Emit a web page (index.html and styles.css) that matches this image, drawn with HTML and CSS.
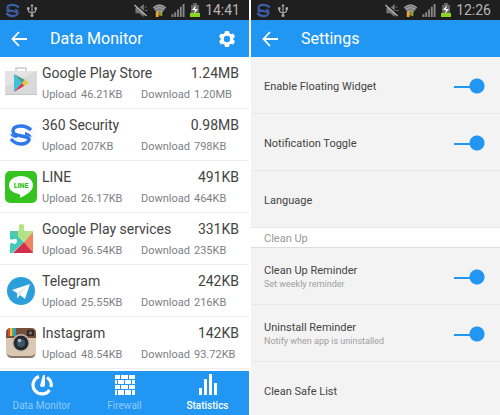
FILE: index.html
```html
<!DOCTYPE html>
<html lang="en">
<head>
    <meta charset="UTF-8">
    <meta name="viewport" content="width=device-width, initial-scale=1.0">
    <title>360 Security</title>
    <link rel="stylesheet" href="styles.css">
</head>
<body>
    <!-- icons used on both screens -->
    <svg class="defs" width="0" height="0" aria-hidden="true">
        <symbol id="logo" viewBox="0 0 24 24">
            <path d="M22 7Q18 3 12 3Q4 3 4 8Q4 11 8 12L17 14Q21 15 20 17Q18 21 12 21Q6 21 2 16" fill="none" stroke="currentColor" stroke-width="3.400"/>
            <path d="M1 11L8 12L8 15Q3 15 1 11ZM23 14L16 12L16 9Q21 10 23 14Z" fill="currentColor"/>
        </symbol>
        <symbol id="usb" viewBox="0 0 12 16">
            <path d="M6 2V14M1.500 5V8Q1.500 10 6 11M10.500 5V8Q10.500 10 6 11" fill="none" stroke="#aaa" stroke-width="1.300"/>
            <path d="M6 0L8 3H4ZM0 4H3V7H0ZM9 4H12V7H9Z" fill="#aaa"/>
            <circle cx="6" cy="14" r="1.800" fill="#aaa"/>
        </symbol>
        <symbol id="mute" viewBox="0 0 14 14">
            <path d="M1 4H5L10 0V14L5 10H1Z" fill="#777"/>
            <path d="M11 4L13 3M11 7H14M11 10L13 11" stroke="#777"/>
            <path d="M2 1L14 12" stroke="#1f1f1f" stroke-width="1.500"/>
            <path d="M0 1L13 13" stroke="#b5b5b5" stroke-width="1.500"/>
        </symbol>
        <symbol id="wifi" viewBox="0 0 14 14">
            <path d="M0 4Q7 -3 14 4L7 13Z" fill="#777"/>
            <path d="M0 4Q7 -2 14 4M2 6Q7 2 12 6M4 8Q7 6 10 8" fill="none" stroke="#b5b5b5"/>
            <path d="M3 8H6V14H3Z" fill="#f5a623"/>
            <path d="M8 8H10V13H8Z" fill="#8bb52c"/>
        </symbol>
        <symbol id="signal" viewBox="0 0 14 14">
            <path d="M0 11H2V14H0ZM3 9H5V14H3ZM6 6H8V14H6ZM9 3H11V14H9ZM12 0H14V14H12Z" fill="#888"/>
        </symbol>
        <symbol id="battery" viewBox="0 0 10 14">
            <path d="M3 0H7V2H9V11H1V2H3Z" fill="#666"/>
            <path d="M0 10H10V14H0Z" fill="#8bd51c"/>
            <path d="M6 2L2 7H5L4 11L8 6H5Z" fill="#fff"/>
        </symbol>
        <symbol id="back" viewBox="0 0 16 16">
            <path d="M8 1L1.500 8L8 15M2 8H16" fill="none" stroke="#fff" stroke-width="1.800"/>
        </symbol>
    </svg>

    <main class="screens">
        <section class="screen monitor">
            <div class="status">
                <svg class="logo" width="15" height="15"><use href="#logo"/></svg>
                <svg width="10" height="15"><use href="#usb"/></svg>
                <svg class="push" width="14" height="13"><use href="#mute"/></svg>
                <svg width="13" height="13"><use href="#wifi"/></svg>
                <svg width="14" height="13"><use href="#signal"/></svg>
                <svg width="10" height="14"><use href="#battery"/></svg>
                <span class="clock">14:41</span>
            </div>
            <header class="bar">
                <button class="icon" aria-label="Back"><svg width="16" height="16"><use href="#back"/></svg></button>
                <h1>Data Monitor</h1>
                <button class="icon" aria-label="Options">
                    <svg width="16" height="16" viewBox="0 0 16 16">
                        <path d="M6 0H10L10.500 2.300L12 3.200L14.200 2.500L16 5.700L14.300 7.200V8.800L16 10.300L14.200 13.500L12 12.800L10.500 13.700L10 16H6L5.500 13.700L4 12.800L1.800 13.500L0 10.300L1.700 8.800V7.200L0 5.700L1.800 2.500L4 3.200L5.500 2.300ZM8 4.800A3.200 3.200 0 1 0 8 11.200A3.200 3.200 0 1 0 8 4.800Z" fill="#fff" fill-rule="evenodd"/>
                    </svg>
                </button>
            </header>

            <ul class="apps">
                <li>
                    <svg width="32" height="32" viewBox="0 0 32 32">
                        <path d="M11 5V1H21V5" fill="none" stroke="#ccc" stroke-width="1.500"/>
                        <path d="M0 4H32V28H0Z" fill="#d9d9d9"/>
                        <path d="M0 4H32L0 20Z" fill="#e4e4e4"/>
                        <path d="M0 27H32V28H0Z" fill="#c6c6c6"/>
                        <path d="M9 7L17 16L9 25Z" fill="#3cc3d8"/>
                        <path d="M9 7L20 13L17 16Z" fill="#4c9a8c"/>
                        <path d="M20 13L24 16L19 19L17 16Z" fill="#e9c53b"/>
                        <path d="M9 25L17 16L19 19Z" fill="#d6334c"/>
                    </svg>
                    <div class="info">
                        <div class="total"><h2>Google Play Store</h2><b>1.24MB</b></div>
                        <div class="traffic"><span>Upload</span><span>46.21KB</span><span>Download</span><span>1.20MB</span></div>
                    </div>
                </li>
                <li>
                    <svg class="blue" width="32" height="32" viewBox="0 0 32 32">
                        <circle cx="16" cy="16" r="15" fill="#fbfbfb"/>
                        <use href="#logo" x="4" y="4" width="24" height="24"/>
                    </svg>
                    <div class="info">
                        <div class="total"><h2>360 Security</h2><b>0.98MB</b></div>
                        <div class="traffic"><span>Upload</span><span>207KB</span><span>Download</span><span>798KB</span></div>
                    </div>
                </li>
                <li>
                    <svg width="32" height="32" viewBox="0 0 32 32">
                        <rect width="32" height="32" rx="5" fill="#35c41f"/>
                        <path d="M16 5C9 5 4 9 4 14.500C4 19 8 22 14 23Q16 24 15 27Q28 21 28 14.500C28 9 23 5 16 5Z" fill="#fff"/>
                        <text class="line-text" x="16" y="17" text-anchor="middle">LINE</text>
                    </svg>
                    <div class="info">
                        <div class="total"><h2>LINE</h2><b>491KB</b></div>
                        <div class="traffic"><span>Upload</span><span>26.17KB</span><span>Download</span><span>464KB</span></div>
                    </div>
                </li>
                <li>
                    <svg width="32" height="32" viewBox="0 0 32 32">
                        <clipPath id="puzzle">
                            <path d="M5 8H13Q15 7 14 5Q13 1 16.500 1Q20 1 19 5Q18 7 20 8H28V30H5V21Q7 19 9 21Q12 21 12 18Q12 15 9 16Q7 17 5 16Z"/>
                        </clipPath>
                        <g clip-path="url(#puzzle)">
                            <path d="M5 6L19 19L5 32Z" fill="#43c9b8"/>
                            <path d="M5 6V0H28V9L19 19Z" fill="#b5e287"/>
                            <path d="M5 8H13V14L19 19L5 8Z" fill="#56c8a0"/>
                            <path d="M28 9V30L19 19Z" fill="#ef8660"/>
                            <path d="M6 32L19 19L29 31Z" fill="#d0304d"/>
                        </g>
                    </svg>
                    <div class="info">
                        <div class="total"><h2>Google Play services</h2><b>331KB</b></div>
                        <div class="traffic"><span>Upload</span><span>96.54KB</span><span>Download</span><span>235KB</span></div>
                    </div>
                </li>
                <li>
                    <svg width="32" height="32" viewBox="0 0 32 32">
                        <circle cx="16" cy="16" r="14" fill="#2b9fda"/>
                        <path d="M7 15L25 9L20 24L15 20L12 23V18Z" fill="#fff"/>
                        <path d="M12 18L22 11L15 20L12 23Z" fill="#dcebf5"/>
                    </svg>
                    <div class="info">
                        <div class="total"><h2>Telegram</h2><b>242KB</b></div>
                        <div class="traffic"><span>Upload</span><span>25.55KB</span><span>Download</span><span>216KB</span></div>
                    </div>
                </li>
                <li>
                    <svg width="32" height="32" viewBox="0 0 32 32">
                        <rect x="1" y="1" width="30" height="30" rx="5" fill="#d9c8b4"/>
                        <path d="M1 11V6Q1 1 6 1H26Q31 1 31 6V11Z" fill="#74503a"/>
                        <path d="M3 2H5V9H3Z" fill="#e0453c"/>
                        <path d="M5 1H7V9H5Z" fill="#f3c23a"/>
                        <path d="M7 1H9V9H7Z" fill="#58b259"/>
                        <path d="M9 1H11V9H9Z" fill="#3d8fd1"/>
                        <rect x="22" y="3" width="7" height="6" rx="1" fill="#30241f"/>
                        <circle cx="25.500" cy="6" r="1.800" fill="#6d7377"/>
                        <circle cx="16" cy="16" r="9" fill="#c9bcb0"/>
                        <circle cx="16" cy="16" r="7.500" fill="#272a30"/>
                        <circle cx="16" cy="16" r="4" fill="#405769"/>
                        <circle cx="14.500" cy="13.500" r="1.800" fill="#a9bccb"/>
                        <path d="M2 27Q3 31 7 31H25Q30 31 30 27Q28 29 25 29H7Q4 29 2 27Z" fill="#8a7462"/>
                    </svg>
                    <div class="info">
                        <div class="total"><h2>Instagram</h2><b>142KB</b></div>
                        <div class="traffic"><span>Upload</span><span>48.54KB</span><span>Download</span><span>93.72KB</span></div>
                    </div>
                </li>
            </ul>

            <nav class="tabs">
                <button>
                    <svg width="22" height="22" viewBox="0 0 22 22">
                        <path d="M8 2.500A9 9 0 1 0 18.500 16M20 13A9 9 0 0 0 16 3.500" fill="none" stroke="#fff" stroke-width="3.200"/>
                        <path d="M9 12L12 1H14V12Q11.500 14 9 12Z" fill="#fff"/>
                    </svg>
                    Data Monitor
                </button>
                <button>
                    <svg width="22" height="22" viewBox="0 0 22 22">
                        <path d="M1 1H6V5H1ZM7 1H14V5H7ZM15 1H21V5H15ZM1 6H3V10H1ZM4 6H10V10H4ZM11 6H17V10H11ZM18 6H21V10H18ZM1 11H6V15H1ZM7 11H14V15H7ZM15 11H21V15H15ZM1 16H3V21H1ZM4 16H10V21H4ZM11 16H17V21H11ZM18 16H21V21H18Z" fill="#fff"/>
                    </svg>
                    Firewall
                </button>
                <button class="active">
                    <svg width="22" height="22" viewBox="0 0 22 22">
                        <path d="M2 14H5V21H2ZM7 5H10V21H7ZM12 0H15V21H12ZM17 9H20V21H17Z" fill="#fff"/>
                    </svg>
                    Statistics
                </button>
            </nav>
        </section>

        <section class="screen settings">
            <div class="status">
                <svg class="logo" width="15" height="15"><use href="#logo"/></svg>
                <svg width="10" height="15"><use href="#usb"/></svg>
                <svg class="push" width="14" height="13"><use href="#mute"/></svg>
                <svg width="13" height="13"><use href="#wifi"/></svg>
                <svg width="14" height="13"><use href="#signal"/></svg>
                <svg width="10" height="14"><use href="#battery"/></svg>
                <span class="clock">12:26</span>
            </div>
            <header class="bar">
                <button class="icon" aria-label="Back"><svg width="16" height="16"><use href="#back"/></svg></button>
                <h1>Settings</h1>
            </header>

            <div class="option">
                <label for="widget">Enable Floating Widget</label>
                <input type="checkbox" id="widget" checked>
            </div>
            <div class="option">
                <label for="notification">Notification Toggle</label>
                <input type="checkbox" id="notification" checked>
            </div>
            <div class="option"><a href="#">Language</a></div>
            <h3>Clean Up</h3>
            <div class="option">
                <label for="cleanup">Clean Up Reminder<small>Set weekly reminder</small></label>
                <input type="checkbox" id="cleanup" checked>
            </div>
            <div class="option">
                <label for="uninstall">Uninstall Reminder<small>Notify when app is uninstalled</small></label>
                <input type="checkbox" id="uninstall" checked>
            </div>
            <div class="option"><a href="#">Clean Safe List</a></div>
        </section>
    </main>
</body>
</html>
```

FILE: styles.css
```css
* {
    box-sizing: border-box;
}
body {
    margin: 0;
    font-family: Roboto, "Liberation Sans", sans-serif;
    color: #444;
    background-color: #fff;
}
h1, h2, h3, ul {
    margin: 0;
    padding: 0;
    font-weight: 400;
}
button {
    border: 0;
    padding: 0;
    background: none;
    font-family: inherit;
    cursor: pointer;
}
svg {
    display: block;
    flex: none;
}
.defs {
    position: absolute;
}
.screens {
    display: grid;
    grid-template-columns: 1fr 1fr;
    gap: 2px;
    height: 100vh;
}
.screen {
    display: flex;
    flex-direction: column;
    overflow: hidden;
}
.settings {
    background-color: #f3f3f3;
}

/* status bar */
.status {
    display: flex;
    flex: none;
    align-items: center;
    gap: 5px;
    height: 20px;
    padding: 0 9px 0 5px;
    background-color: #1f1f1f;
}
.status .logo {
    color: #3c5fa8;
    margin-right: 2px;
}
.status .push {
    margin-left: auto;
}
.clock {
    color: #b5b5b5;
    font-size: 14px;
    line-height: 20px;
}

/* title bar */
.bar {
    display: flex;
    flex: none;
    align-items: center;
    height: 37px;
    padding: 0 14px 0 11px;
    background-color: #2196f3;
}
.bar h1 {
    flex: 1;
    margin-left: 23px;
    color: #fff;
    font-size: 16px;
    line-height: 20px;
}

/* app list */
.apps {
    list-style: none;
}
.apps li {
    display: flex;
    align-items: center;
    gap: 5px;
    height: 52px;
    padding: 0 10px 0 5px;
    border-bottom: 1px solid #ededed;
}
.blue {
    color: #2e78ee;
}
.line-text {
    fill: #35c41f;
    font-size: 7px;
    font-weight: 900;
}
.info {
    flex: 1;
    padding-top: 2px;
}
.total {
    display: flex;
    justify-content: space-between;
    line-height: 20px;
}
.total h2, .total b {
    font-size: 14px;
    font-weight: 400;
}
.traffic {
    display: grid;
    grid-template-columns: 39px 60px 53px 1fr;
    margin-top: 3px;
    color: #7d8084;
    font-size: 11px;
    line-height: 18px;
}

/* bottom tabs */
.tabs {
    display: grid;
    grid-template-columns: repeat(3, 1fr);
    height: 44px;
    margin-top: auto;
    background-color: #2196f3;
}
.tabs button {
    display: flex;
    flex-direction: column;
    align-items: center;
    justify-content: center;
    gap: 3px;
    color: #8fcbfa;
    font-size: 10px;
    line-height: 14px;
}
.tabs .active {
    color: #fff;
    font-weight: 500;
}

/* settings */
.option {
    display: flex;
    flex: none;
    align-items: center;
    justify-content: space-between;
    height: 57px;
    padding: 2px 15px 0 13px;
    border-bottom: 1px solid #e8e8e8;
    font-size: 11px;
    line-height: 15px;
}
.option a {
    color: inherit;
    text-decoration: none;
}
.option small {
    display: block;
    color: #a0a0a0;
    font-size: 9px;
    line-height: 13px;
}
.option input {
    appearance: none;
    width: 31px;
    height: 16px;
    margin: 0;
    background:
        radial-gradient(circle at 23px 8px, #2196f3 7px, transparent 8px),
        linear-gradient(#2196f3, #2196f3) 0 8px / 20px 2px no-repeat;
}
.settings h3 {
    flex: none;
    height: 20px;
    padding-left: 13px;
    border-bottom: 1px solid #dcdcdc;
    background-color: #fff;
    color: #999;
    font-size: 11px;
    line-height: 22px;
}
```
